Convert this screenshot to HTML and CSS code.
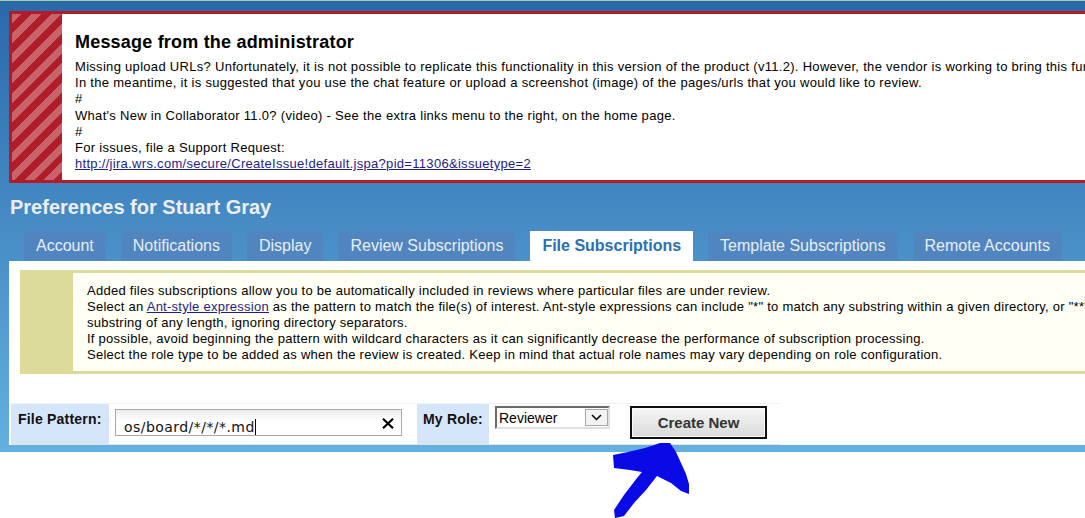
FILE: index.html
```html
<!DOCTYPE html>
<html>
<head>
<meta charset="utf-8">
<title>Preferences</title>
<link rel="stylesheet" href="styles.css">
</head>
<body>
<div class="shell">
  <div class="notice">
    <div class="stripes"></div>
    <div class="notice-body">
      <h2 class="notice-title">Message from the administrator</h2>
      <div class="notice-text">
        Missing upload URLs? Unfortunately, it is not possible to replicate this functionality in this version of the product (v11.2). However, the vendor is working to bring this functionality back in a future release.<br>
        In the meantime, it is suggested that you use the chat feature or upload a screenshot (image) of the pages/urls that you would like to review.<br>
        #<br>
        What's New in Collaborator 11.0? (video) - See the extra links menu to the right, on the home page.<br>
        #<br>
        For issues, file a Support Request:<br>
        <a class="link" href="#">http://jira.wrs.com/secure/CreateIssue!default.jspa?pid=11306&amp;issuetype=2</a>
      </div>
    </div>
  </div>

  <h1 class="page-title">Preferences for Stuart Gray</h1>

  <div class="tabs">
    <span class="tab">Account</span>
    <span class="tab">Notifications</span>
    <span class="tab">Display</span>
    <span class="tab">Review Subscriptions</span>
    <span class="tab active">File Subscriptions</span>
    <span class="tab">Template Subscriptions</span>
    <span class="tab">Remote Accounts</span>
  </div>

  <div class="panel">
    <div class="info">
      <div class="info-side"></div>
      <div class="info-text">
        Added files subscriptions allow you to be automatically included in reviews where particular files are under review.<br>
        Select an <a class="link" href="#">Ant-style expression</a> as the pattern to match the file(s) of interest. Ant-style expressions can include "*" to match any substring within a given directory, or "**" to match a<br>
        substring of any length, ignoring directory separators.<br>
        If possible, avoid beginning the pattern with wildcard characters as it can significantly decrease the performance of subscription processing.<br>
        Select the role type to be added as when the review is created. Keep in mind that actual role names may vary depending on role configuration.
      </div>
    </div>

    <div class="form-row">
      <div class="cell label label-pattern">File Pattern:</div>
      <div class="cell value value-pattern">
        <div class="input">
          <span class="input-text">os/board/*/*/*.md<span class="caret"></span></span>
          <svg class="clear" width="12" height="11" viewBox="0 0 12 11"><path d="M1 0.8 L11 10.2 M11 0.8 L1 10.2" stroke="#000" stroke-width="2.2" fill="none"/></svg>
        </div>
      </div>
      <div class="cell label label-role">My Role:</div>
      <div class="cell value value-role">
        <div class="select">
          <span class="select-text">Reviewer</span>
          <span class="select-btn"><svg width="11" height="7" viewBox="0 0 11 7"><path d="M1 1 L5.5 5.5 L10 1" stroke="#000" stroke-width="1.5" fill="none"/></svg></span>
        </div>
        <div class="button">Create New</div>
      </div>
    </div>
  </div>
</div>

<svg class="arrow" width="1085" height="518" viewBox="0 0 1085 518">
  <polygon fill="#0a0ae6" points="613,455 628,452 645,448 660,443 670,443 676,452 681,463 686,474 689,484 689,494 681,491 671,483 657,476 646,490 634,503 624,516 615,518 614,510 624,495 637,478 642,472 630,470 614,468"/>
</svg>
</body>
</html>
```
FILE: styles.css
```css
html, body {
  margin: 0;
  padding: 0;
  overflow: hidden;
  background: #fff;
}
body {
  width: 1085px;
  height: 518px;
  position: relative;
  font-family: "Liberation Sans", Arial, sans-serif;
  color: #000;
}
.shell {
  width: 1400px;
  border-top: 1px solid #a2d3a4;
  background: linear-gradient(#2a68aa, #64b0e1);
  padding: 10px 0 7px 9px;
}
.notice {
  display: flex;
  border: 3px solid #b11c29;
  height: 166px;
}
.stripes {
  width: 50px;
  background: repeating-linear-gradient(135deg, #c8636a 0 7px, #b11c29 7px 14px);
}
.notice-body {
  flex: 1;
  background: #fff;
  padding: 17px 13px 0;
}
.notice-title {
  margin: 0 0 6px;
  font: bold 18px/22px "Liberation Sans", Arial, sans-serif;
  letter-spacing: 0.2px;
  color: #000;
}
.notice-text {
  font-size: 13px;
  line-height: 16.2px;
  letter-spacing: 0.3px;
  white-space: nowrap;
}
.link {
  color: #1d1d8c;
  text-decoration: underline;
}
.page-title {
  margin: 12px 0 12px 1px;
  font: bold 20px/24px "Liberation Sans", Arial, sans-serif;
  color: #eceef1;
}
.tabs {
  display: flex;
  gap: 15px;
  margin-left: 15px;
  height: 30px;
}
.tab {
  padding: 0 12px;
  line-height: 30px;
  font-size: 16px;
  background: #5085bf;
  color: #e8eef6;
}
.tab.active {
  background: #fff;
  color: #2a70b6;
  font-weight: bold;
}
.panel {
  background: #fff;
  height: 184px;
  padding-top: 9px;
  box-sizing: border-box;
}
.info {
  display: flex;
  margin-left: 11px;
  border: 3px solid #dcdb9a;
  background: #fffff6;
}
.info-side {
  width: 50px;
  background: #dcdb9a;
}
.info-text {
  padding: 10px 14px 8px;
  font-size: 13px;
  line-height: 16px;
  letter-spacing: 0.26px;
  white-space: nowrap;
}
.form-row {
  display: flex;
  margin: 29px 0 0 2px;
  width: 769px;
  height: 42px;
  box-sizing: border-box;
  border-top: 1px solid #f1f1f1;
  border-bottom: 1px solid #e2e2e2;
}
.cell {
  box-sizing: border-box;
}
.label {
  background: #d6e6fa;
  font-weight: bold;
  font-size: 14px;
  line-height: 16px;
  padding: 7px 0 0 7px;
  letter-spacing: 0.2px;
  color: #111;
}
.label-pattern { width: 98px; }
.label-role { width: 72px; padding-left: 6px; }
.value {
  display: flex;
  align-items: flex-start;
}
.value-pattern { width: 308px; }
.value-role { flex: 1; }
.input {
  display: flex;
  align-items: flex-start;
  margin: 5px 0 0 6px;
  width: 287px;
  height: 27px;
  box-sizing: border-box;
  border: 1px solid #a9a9ad;
  background: linear-gradient(#ececec, #fff 45%);
}
.input-text {
  flex: 1;
  padding: 9px 0 0 8px;
  font-family: "DejaVu Sans", Verdana, sans-serif;
  font-size: 14px;
  line-height: 17px;
  letter-spacing: 0.45px;
  color: #111;
}
.caret {
  display: inline-block;
  width: 1px;
  height: 16px;
  background: #000;
  vertical-align: -3px;
}
.clear {
  margin: 8px 7px 0 0;
}
.select {
  display: flex;
  align-items: flex-start;
  margin: 2px 0 0 6px;
  width: 115px;
  height: 23px;
  box-sizing: border-box;
  border-top: 2px solid #6b6b6b;
  border-left: 2px solid #6b6b6b;
  border-right: 2px solid #e0e0e0;
  border-bottom: 2px solid #e0e0e0;
  background: #fff;
}
.select-text {
  flex: 1;
  padding-left: 2px;
  font-size: 14px;
  line-height: 21px;
}
.select-btn {
  display: flex;
  align-items: center;
  justify-content: center;
  margin-top: 1px;
  width: 23px;
  height: 17px;
  box-sizing: border-box;
  border: 1px solid #a8a8a8;
  background: #f3f3f3;
}
.button {
  margin: 2px 0 0 20px;
  width: 137px;
  height: 33px;
  box-sizing: border-box;
  border: 2px solid #111;
  box-shadow: inset 0 0 0 1px #fafafa;
  background: linear-gradient(#f6f6f6, #dadada);
  font-weight: bold;
  font-size: 15px;
  line-height: 29px;
  text-align: center;
  color: #333;
}
.arrow {
  position: absolute;
  left: 0;
  top: 0;
  pointer-events: none;
}
```
